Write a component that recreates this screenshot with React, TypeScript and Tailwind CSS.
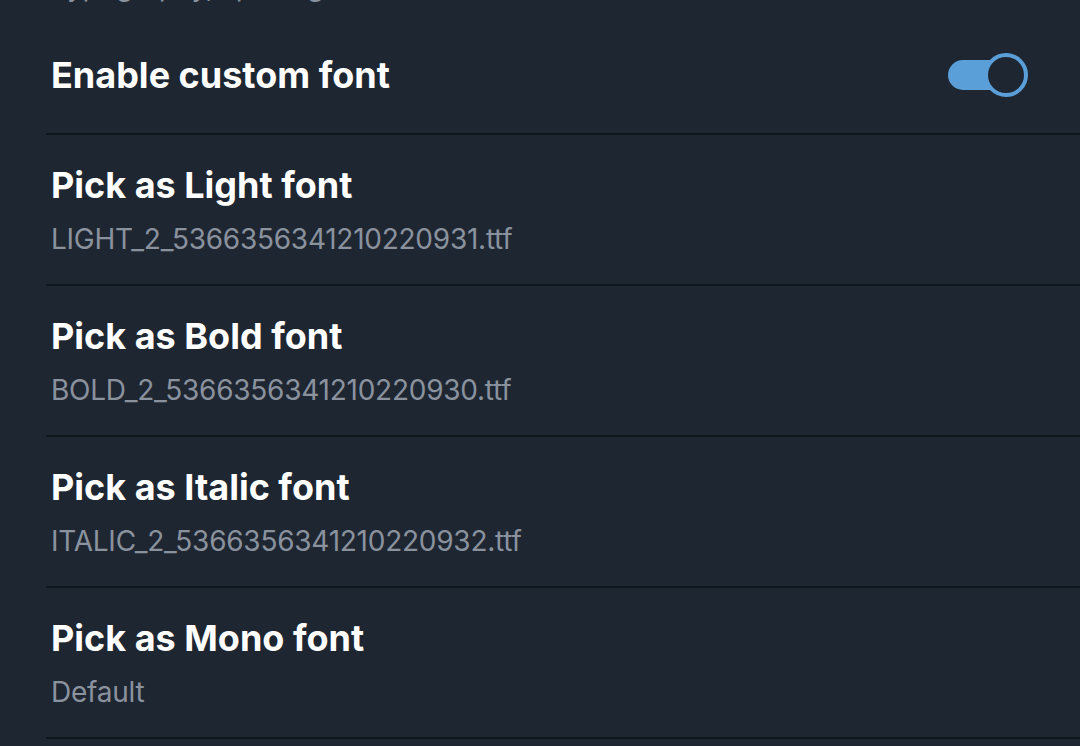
import React from 'react';

const fontRows = [
  { title: 'Pick as Light font', value: 'LIGHT_2_5366356341210220931.ttf' },
  { title: 'Pick as Bold font', value: 'BOLD_2_5366356341210220930.ttf' },
  { title: 'Pick as Italic font', value: 'ITALIC_2_5366356341210220932.ttf' },
  { title: 'Pick as Mono font', value: 'Default' },
];

function Toggle({ on }: { on: boolean }) {
  return (
    <div className="relative h-[44px] w-[82px]">
      <div className="absolute left-[2px] top-[7px] h-[30px] w-[64px] rounded-full bg-[#5b9fd9]" />
      <div
        className={
          on
            ? 'absolute right-0 top-0 h-[44px] w-[44px] rounded-full border-[4px] border-[#5b9fd9] bg-[#1e2632]'
            : 'absolute left-0 top-0 h-[44px] w-[44px] rounded-full border-[4px] border-[#8a929e] bg-[#1e2632]'
        }
      />
    </div>
  );
}

export default function App() {
  return (
    <div
      className="h-[746px] w-full overflow-hidden bg-[#1e2632] text-white"
      style={{ fontFamily: 'Inter, "Open Sans", sans-serif' }}
    >
      {/* previous row, scrolled off */}
      <div className="-mt-[30px] pl-[51px] text-[28px] leading-[32px] tracking-[-0.25px] text-[#8a929e]">
        Typography, spacing
      </div>

      <div className="ml-[46px]">
        {/* Enable row */}
        <div className="flex h-[133px] items-center justify-between border-b-2 border-[#10161e] pl-[5px] pr-[52px] pt-[14px]">
          <span className="text-[36px] font-bold leading-[44px] tracking-[0px]">Enable custom font</span>
          <Toggle on />
        </div>

        {fontRows.map((row) => (
          <div
            key={row.title}
            className="flex h-[151px] flex-col border-b-2 border-[#10161e] pl-[5px] pt-[28px]"
          >
            <span className="text-[36px] font-bold leading-[44px] tracking-[0px]">{row.title}</span>
            <span className="mt-[14px] text-[28px] leading-[36px] tracking-[-0.25px] text-[#8a929e]">
              {row.value}
            </span>
          </div>
        ))}
      </div>
    </div>
  );
}
